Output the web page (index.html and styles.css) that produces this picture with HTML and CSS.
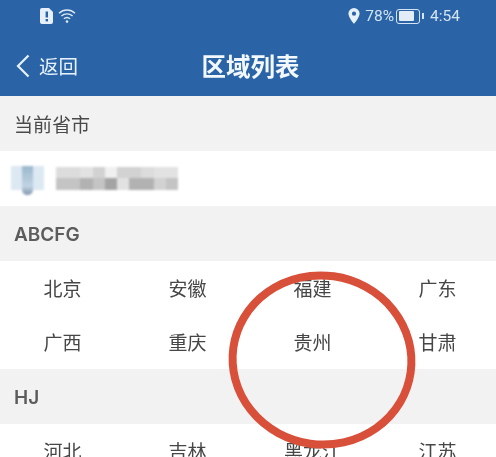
FILE: index.html
```html
<!DOCTYPE html>
<html lang="zh">
<head>
<meta charset="utf-8">
<title>区域列表</title>
<link rel="stylesheet" href="styles.css">
</head>
<body>
<div class="page">
  <header class="top">
    <div class="status">
      <div class="status-left">
        <svg class="sim" width="14" height="16" viewBox="0 0 14 16"><path d="M2 0h7l4 4v10a2 2 0 0 1-2 2H2a2 2 0 0 1-2-2V2a2 2 0 0 1 2-2z" fill="#e6f0fa"/><rect x="5.6" y="3.5" width="2.4" height="6" fill="#2a64a6"/><rect x="5.6" y="11" width="2.4" height="2.4" fill="#2a64a6"/></svg>
        <svg class="wifi" width="18" height="16" viewBox="0 0 18 16" fill="none" stroke="#dce9f6" stroke-width="1.4"><path d="M1 5.2C5.5 1 12.5 1 17 5.2"/><path d="M3.4 8C6.6 5.1 11.4 5.1 14.6 8"/><path d="M5.9 10.8C7.7 9.2 10.3 9.2 12.1 10.8"/><circle cx="9" cy="13.6" r="1.3" fill="#dce9f6" stroke="none"/></svg>
      </div>
      <div class="status-right">
        <svg class="pin" width="12" height="16" viewBox="0 0 12 16"><path fill-rule="evenodd" d="M6 0a5.6 5.6 0 0 1 5.6 5.6C11.600 9.500 6 16 6 16S.4 9.500.4 5.600A5.600 5.600 0 0 1 6 0zm0 3.600a2.100 2.100 0 1 0 0 4.200 2.100 2.100 0 0 0 0-4.200z" fill="#e6f0fa"/></svg>
        <span class="pct">78%</span>
        <span class="battery"><span class="battery-fill"></span></span><span class="battery-tip"></span>
        <span class="time">4:54</span>
      </div>
    </div>
    <nav class="nav">
      <div class="back">
        <svg width="14" height="24" viewBox="0 0 14 24" fill="none" stroke="#e8f2fc" stroke-width="2.2"><path d="M12.500 1.500 2 12l10.500 10.500"/></svg>
        <span>返回</span>
      </div>
      <h1 class="title">区域列表</h1>
    </nav>
  </header>

  <div class="section-head">当前省市</div>
  <div class="current">
    <div class="loc-icon"><span class="loc-strip"></span></div>
    <div class="mosaic">
      <i class="c2"></i><i class="c2"></i><i class="c1"></i><i class="c3"></i><i class="c0"></i><i class="c3"></i><i class="c3"></i><i class="c2"></i><i class="c1"></i><i class="c1"></i>
      <i class="c4"></i><i class="c4"></i><i class="c5"></i><i class="c4"></i><i class="c6"></i><i class="c1"></i><i class="c5"></i><i class="c5"></i><i class="c3"></i><i class="c4"></i>
    </div>
  </div>

  <div class="section-head latin">ABCFG</div>
  <div class="grid">
    <div class="cell">北京</div><div class="cell">安徽</div><div class="cell">福建</div><div class="cell">广东</div>
    <div class="cell">广西</div><div class="cell">重庆</div><div class="cell">贵州</div><div class="cell">甘肃</div>
  </div>

  <div class="section-head latin">HJ</div>
  <div class="grid">
    <div class="cell">河北</div><div class="cell">吉林</div><div class="cell">黑龙江</div><div class="cell">江苏</div>
  </div>

  <svg class="ring" width="200" height="196" viewBox="0 0 200 196" fill="none"><ellipse cx="100" cy="98" rx="89.500" ry="84.500" stroke="#d9503a" stroke-width="8"/></svg>
</div>
</body>
</html>
```

FILE: styles.css
```css
* { box-sizing: border-box; }
html, body { margin: 0; padding: 0; }
body {
  width: 496px;
  height: 457px;
  overflow: hidden;
  background: #fff;
  font-family: "Noto Sans CJK SC", "Noto Sans", sans-serif;
}
.page {
  position: relative;
  width: 496px;
  height: 457px;
  overflow: hidden;
  filter: blur(0.4px);
}
.top {
  height: 96px;
  background: #2a64a6;
  color: #f2f8fe;
}
.status {
  height: 32px;
  padding: 0 36px 0 40px;
  display: flex;
  align-items: center;
  justify-content: space-between;
}
.status-left, .status-right { display: flex; align-items: center; }
.status-left { gap: 4px; }
.status-right { font-family: "Roboto", sans-serif; font-size: 15.500px; color: #d5e4f3; }
.pin { margin-right: 5px; }
.pct { margin-right: 2px; }
.battery {
  width: 24px;
  height: 15px;
  border: 1.500px solid #d5e4f3;
  border-radius: 3px;
  padding: 1.500px;
  display: flex;
}
.battery-fill { width: 80%; background: #e2edf8; border-radius: 1px; }
.battery-tip {
  width: 2px;
  height: 6px;
  margin-left: 2px;
  margin-right: 6px;
  background: #d5e4f3;
}
.nav {
  position: relative;
  height: 64px;
  padding: 4px 0 0 5px;
  display: flex;
  align-items: center;
  justify-content: center;
}
.back {
  position: absolute;
  left: 16px;
  top: 21px;
  display: flex;
  align-items: center;
  gap: 9px;
  font-size: 19.500px;
  line-height: 26px;
  color: #e8f2fc;
}
.title {
  margin: 0;
  font-size: 24.500px;
  font-weight: 700;
  line-height: 34px;
}
.section-head {
  height: 55px;
  padding: 0 14px 1px;
  display: flex;
  align-items: center;
  background: #f2f2f2;
  color: #4a4a4a;
  font-size: 19px;
}
.latin {
  padding: 2px 14px 0;
  font-family: "Inter", "Noto Sans", sans-serif;
  font-weight: 600;
  font-size: 19px;
  color: #5c5c5c;
}
.current {
  height: 55px;
  background: #fff;
  padding: 0 0 0 11px;
  display: flex;
  align-items: center;
  gap: 12px;
}
.loc-icon {
  width: 33px;
  height: 24px;
  background: #dce8f2;
  display: flex;
  justify-content: center;
  margin-top: -1px;
  filter: blur(0.8px);
}
.loc-strip {
  width: 11px;
  height: 29px;
  background: linear-gradient(#9cb8cc, #c0d4e4 70%, #7f93aa);
  border-radius: 0 0 5px 5px;
}
.mosaic {
  width: 122px;
  height: 23px;
  display: grid;
  grid-template-columns: repeat(10, 1fr);
  grid-template-rows: 1fr 1fr;
  filter: blur(1px);
  margin-top: -1px;
}
.c0 { background: #f0f0f0; }
.c1 { background: #e2e2e2; }
.c2 { background: #dcdcdc; }
.c3 { background: #d2d2d2; }
.c4 { background: #c4c4c4; }
.c5 { background: #b2b2b2; }
.c6 { background: #a4a4a4; }
.grid {
  display: grid;
  grid-template-columns: repeat(4, 125px);
  grid-auto-rows: 54px;
  background: #fff;
}
.cell {
  display: flex;
  align-items: center;
  justify-content: center;
  padding-bottom: 2px;
  font-size: 19px;
  color: #464646;
}
.ring {
  position: absolute;
  left: 222px;
  top: 262px;
  transform: rotate(8deg);
}
```
